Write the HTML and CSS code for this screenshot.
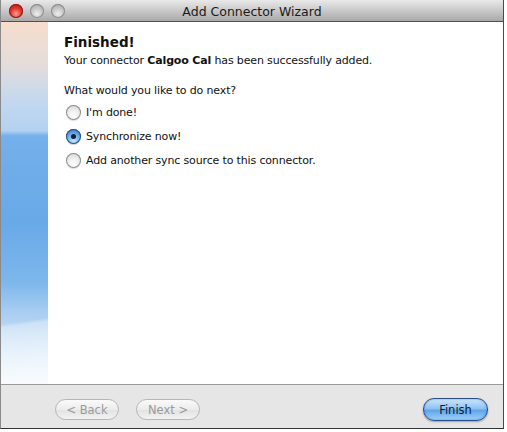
FILE: index.html
```html
<!DOCTYPE html>
<html>
<head>
<meta charset="utf-8">
<link rel="stylesheet" href="styles.css">
</head>
<body>
<div class="window">
  <div class="titlebar">
    <div class="lights">
      <span class="light red"></span>
      <span class="light gray"></span>
      <span class="light gray"></span>
    </div>
    <div class="title">Add Connector Wizard</div>
    <div></div>
  </div>
  <div class="main">
    <div class="side"></div>
    <div class="content">
      <h1 class="heading">Finished!</h1>
      <p class="msg">Your connector <b>Calgoo Cal</b> has been successfully added.</p>
      <p class="question">What would you like to do next?</p>
      <div class="options">
        <label class="option"><span class="radio"></span>I'm done!</label>
        <label class="option"><span class="radio on"></span>Synchronize now!</label>
        <label class="option"><span class="radio"></span>Add another sync source to this connector.</label>
      </div>
    </div>
  </div>
  <div class="footer">
    <div class="navbtns">
      <span class="btn disabled">&lt; Back</span>
      <span class="btn disabled">Next &gt;</span>
    </div>
    <span class="btn primary">Finish</span>
  </div>
</div>
</body>
</html>
```
FILE: styles.css
```css
* { box-sizing: border-box; }
html, body { margin: 0; padding: 0; background: #ffffff; }
body { font-family: "DejaVu Sans", "Liberation Sans", sans-serif; color: #111; }

.window {
  width: 504px;
  height: 429px;
  border-right: 1px solid #4a4a4a;
  border-bottom: 1px solid #333;
  border-left: 1px solid #8a8a8a;
  display: flex;
  flex-direction: column;
  background: #e8e8e8;
}

.titlebar {
  height: 22px;
  flex: none;
  display: grid;
  grid-template-columns: 1fr auto 1fr;
  align-items: center;
  background: linear-gradient(#e9e9e9, #c9c9c9 50%, #a9a9a9);
  border-bottom: 1px solid #505050;
}
.lights { display: flex; gap: 7px; padding-left: 8px; }
.light {
  width: 14px; height: 14px; border-radius: 50%;
  display: block;
}
.light.red {
  background: radial-gradient(circle at 50% 70%, #ff9a90 0, #e0392f 45%, #a5120c 100%);
  box-shadow: inset 0 0 0 1px #8b1a14;
}
.light.gray {
  background: radial-gradient(circle at 50% 70%, #eeeeee 0, #c4c4c4 50%, #9a9a9a 100%);
  box-shadow: inset 0 0 0 1px #8c8c8c;
}
.title {
  font-size: 12.5px;
  color: #1a1a1a;
  padding-top: 1px;
}

.main {
  height: 363px;
  flex: none;
  display: flex;
  background: #fff;
  border-bottom: 1px solid #9a9a9a;
}
.side {
  width: 47px;
  flex: none;
  background:
    linear-gradient(172deg, transparent 0 82%, rgba(255,255,255,0.35) 83%, rgba(255,255,255,0.7) 100%),
    linear-gradient(#f6ddcb 0%, #e4dcdc 12%, #c2d8ef 22%, #b3d2f2 30%, #74b0ea 31.5%, #68a9e8 55%, #7db7ec 72%, #a8cdf1 80%, #d3e6f8 92%, #eaf2fb 100%);
}
.content {
  flex: 1;
  padding: 11px 0 0 16px;
}
.heading {
  margin: 0;
  font-size: 13.5px;
  font-weight: bold;
  line-height: 18px;
}
.msg {
  margin: 3px 0 0;
  font-size: 11px;
  letter-spacing: -0.15px;
  line-height: 14px;
}
.question {
  margin: 16px 0 0;
  font-size: 11px;
  letter-spacing: -0.15px;
  line-height: 14px;
}
.options {
  margin-top: 6px;
  display: flex;
  flex-direction: column;
  gap: 8px;
}
.option {
  display: flex;
  align-items: center;
  gap: 5px;
  font-size: 11px;
  letter-spacing: -0.15px;
  height: 16px;
  padding-left: 2px;
}
.radio {
  width: 15px; height: 15px; border-radius: 50%;
  flex: none;
  background: radial-gradient(circle at 50% 75%, #ffffff 0, #f0f0f0 40%, #cfcfcf 100%);
  box-shadow: inset 0 0 0 1px #8d8d8d, 0 1px 1px rgba(0,0,0,0.15);
  display: flex; align-items: center; justify-content: center;
}
.radio.on {
  background: radial-gradient(circle at 50% 80%, #c7e4fb 0, #6fb0ea 45%, #2d6fc0 100%);
  box-shadow: inset 0 0 0 1px #2a4f86, 0 1px 1px rgba(0,0,0,0.2);
}
.radio.on::after {
  content: "";
  width: 5px; height: 5px; border-radius: 50%;
  background: #10203a;
}

.footer {
  flex: 1;
  display: flex;
  align-items: center;
  justify-content: space-between;
  padding: 6px 15px 0 54px;
  background: #e6e6e6;
}
.navbtns { display: flex; gap: 17px; }
.btn {
  display: flex;
  align-items: center;
  justify-content: center;
  width: 64px;
  height: 21px;
  border-radius: 11px;
  font-size: 11.5px;
}
.btn.disabled {
  color: #9a9a9a;
  border: 1px solid #b5b5b5;
  background: linear-gradient(#fafafa, #ececec 50%, #e2e2e2 51%, #f2f2f2);
}
.btn.primary {
  width: 65px;
  height: 23px;
  color: #0d1a2c;
  border: 1px solid #2b4e8c;
  background: linear-gradient(#cfe6fb, #8ec3f3 45%, #5fa5ea 55%, #9fd2fb);
  box-shadow: 0 1px 2px rgba(0,0,0,0.3), inset 0 0 2px rgba(20,60,140,0.5);
}
```
